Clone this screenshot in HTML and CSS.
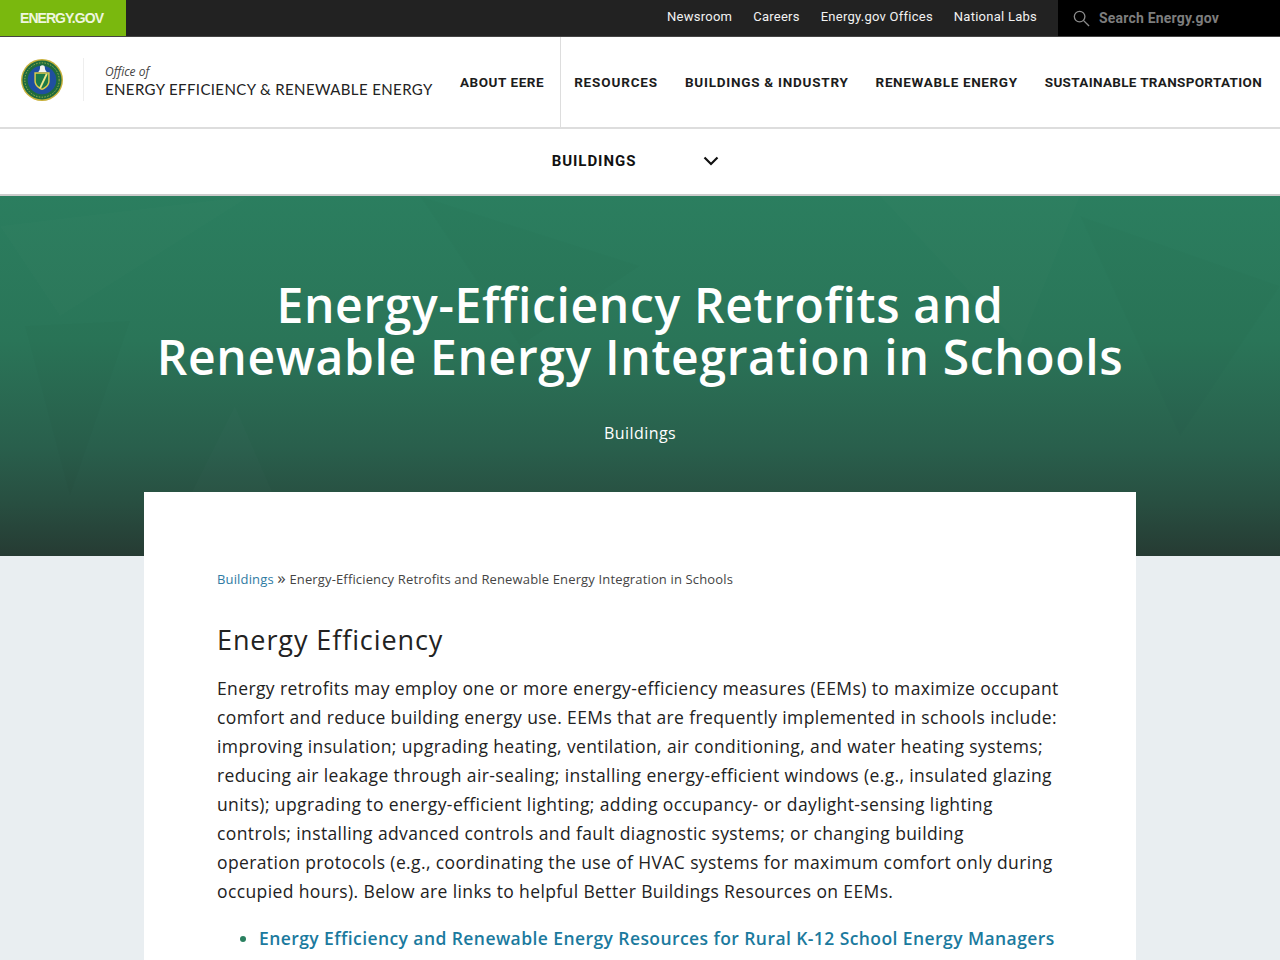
FILE: index.html
```html
<!DOCTYPE html>
<html lang="en">
<head>
    <meta charset="UTF-8">
    <meta name="viewport" content="width=device-width, initial-scale=1.0">
    <title>Energy-Efficiency Retrofits and Renewable Energy Integration in Schools</title>
    <link rel="stylesheet" href="styles.css">
</head>
<body>
    <div class="top-bar">
        <a class="top-logo">ENERGY.GOV</a>
        <nav class="top-links">
            <a>Newsroom</a>
            <a>Careers</a>
            <a>Energy.gov Offices</a>
            <a>National Labs</a>
        </nav>
        <div class="top-search">
            <svg width="17" height="17" viewBox="0 0 18 18" fill="none" stroke="#8c8c8c" stroke-width="1.4">
                <circle cx="7" cy="7" r="5.6"/>
                <path d="M11 11l6 6"/>
            </svg>
            <span>Search Energy.gov</span>
        </div>
    </div>

    <header class="site-header">
        <div class="brand">
            <svg class="seal" width="42" height="42" viewBox="0 0 44 44">
                <circle cx="22" cy="22" r="22" fill="#c9b13c"/>
                <circle cx="22" cy="22" r="20.500" fill="#1f6b3c"/>
                <circle cx="22" cy="22" r="18" fill="none" stroke="#a7b84a" stroke-width="1" stroke-dasharray="1.500 1.500"/>
                <circle cx="22" cy="22" r="15" fill="#1f4fa0"/>
                <path d="M20 7.500c2-1.500 5-1 5 1.500 0 2 .5 3 2 4.500h-9c1.500-1.500 2-3 2-6z" fill="#f4f4f0"/>
                <path d="M14 14h16v9c0 5-4 8-8 9.500-4-1.500-8-4.500-8-9.500z" fill="#e2cd4a"/>
                <path d="M15.500 15.500h13v7.500c0 4-3.500 6.500-6.500 7.800-3-1.300-6.500-3.800-6.500-7.800z" fill="#1d7a48"/>
                <path d="M27 15.500l-7 15" stroke="#f2e88a" stroke-width="2" fill="none"/>
            </svg>
            <div class="brand-text">
                <em>Office of</em>
                <span>ENERGY EFFICIENCY &amp; RENEWABLE ENERGY</span>
            </div>
        </div>
        <nav class="main-nav">
            <a class="nav-about">ABOUT EERE</a>
            <a class="nav-resources">RESOURCES</a>
            <a class="nav-buildings">BUILDINGS &amp; INDUSTRY</a>
            <a class="nav-renewable">RENEWABLE ENERGY</a>
            <a class="nav-transport">SUSTAINABLE TRANSPORTATION</a>
        </nav>
    </header>

    <div class="sub-nav">
        <span>BUILDINGS</span>
        <svg width="16" height="10" viewBox="0 0 16 10" fill="none" stroke="#111" stroke-width="2.200">
            <path d="M1.500 1.500L8 8l6.500-6.500"/>
        </svg>
    </div>

    <section class="hero">
        <!-- faint facets behind the title -->
        <svg class="hero-facets" width="1280" height="360" viewBox="0 0 1280 360">
            <polygon points="0,30 60,120 250,0" fill="#fff" opacity="0.012"/>
            <polygon points="25,130 70,300 130,125" fill="#000" opacity="0.015"/>
            <polygon points="190,300 235,210 300,360 160,360" fill="#fff" opacity="0.012"/>
            <polygon points="880,0 1080,0 1020,150" fill="#fff" opacity="0.01"/>
            <polygon points="1080,20 1280,90 1180,240" fill="#000" opacity="0.01"/>
            <polygon points="420,0 640,70 520,150" fill="#000" opacity="0.01"/>
        </svg>
        <h1>Energy-Efficiency Retrofits and<br>Renewable Energy Integration in Schools</h1>
        <p class="hero-sub">Buildings</p>
    </section>

    <main class="content">
        <p class="breadcrumb"><a>Buildings</a> <span>»</span> Energy-Efficiency Retrofits and Renewable Energy Integration in Schools</p>
        <h2>Energy Efficiency</h2>
        <p class="body-text">Energy retrofits may employ one or more energy-efficiency measures (EEMs) to maximize occupant<br>comfort and reduce building energy use. EEMs that are frequently implemented in schools include:<br>improving insulation; upgrading heating, ventilation, air conditioning, and water heating systems;<br>reducing air leakage through air-sealing; installing energy-efficient windows (e.g., insulated glazing<br>units); upgrading to energy-efficient lighting; adding occupancy- or daylight-sensing lighting<br>controls; installing advanced controls and fault diagnostic systems; or changing building<br>operation protocols (e.g., coordinating the use of HVAC systems for maximum comfort only during<br>occupied hours). Below are links to helpful Better Buildings Resources on EEMs.</p>
        <ul class="links">
            <li><a>Energy Efficiency and Renewable Energy Resources for Rural K-12 School Energy Managers</a></li>
        </ul>
    </main>
</body>
</html>
```

FILE: styles.css
```css
/* General Styles */
html, body {
    height: 960px;
    overflow: hidden;
}
body {
    margin: 0;
    font-family: "Open Sans", sans-serif;
    background-color: #e9eef1;
    color: #222;
}

/* Top Bar */
.top-bar {
    display: flex;
    height: 36px;
    background-color: #222;
    border-bottom: 1px solid #444;
}
.top-logo {
    width: 106px;
    padding-left: 20px;
    background-color: #7ab80e;
    color: #eef6df;
    font: bold 14px/37px "Liberation Sans", sans-serif;
    letter-spacing: -0.95px;
}
.top-links {
    display: flex;
    gap: 21px;
    margin-left: auto;
    padding: 8px 21px 0 0;
}
.top-links a {
    color: #f2f2f2;
    font: 400 13px/17px Roboto, sans-serif;
    letter-spacing: 0.25px;
}
.top-search {
    display: flex;
    align-items: center;
    gap: 9px;
    width: 207px;
    padding-left: 15px;
    background-color: #000;
    color: #7d7d7d;
    font: bold 14px "Roboto", sans-serif;
    letter-spacing: 0.2px;
}

/* Site Header */
.site-header {
    display: flex;
    justify-content: space-between;
    height: 90px;
    background-color: #fff;
    border-bottom: 2px solid #ddd;
}
.brand {
    display: flex;
    flex-shrink: 0;
    align-items: center;
    padding: 0 0 5px 21px;
}
.seal {
    margin-right: 20px;
}
.brand-text {
    display: flex;
    flex-direction: column;
    padding: 5px 0 3px 21px;
    border-left: 1px solid #eee;
    color: #222;
    white-space: nowrap;
}
.brand-text em {
    font-size: 12px;
    line-height: 18px;
    color: #444;
}
.brand-text span {
    font: 15px/17px Lato, sans-serif;
    letter-spacing: 0.38px;
}
.main-nav {
    display: flex;
    padding-right: 18px;
}
.main-nav a {
    display: flex;
    align-items: center;
    font: bold 13.500px Roboto, sans-serif;
    color: #1c1c1c;
    padding-left: 27px;
    white-space: nowrap;
}
.nav-about {
    letter-spacing: 0.55px;
}
.main-nav .nav-resources {
    margin-left: 16px;
    padding-left: 13px;
    border-left: 1px solid #ddd;
    letter-spacing: 0.85px;
}
.nav-buildings {
    letter-spacing: 0.75px;
}
.nav-renewable {
    letter-spacing: 0.65px;
}
.nav-transport {
    letter-spacing: 0.33px;
}

/* Section Menu */
.sub-nav {
    display: flex;
    align-items: center;
    justify-content: center;
    gap: 67px;
    height: 64px;
    padding: 0 9px 1px 0;
    background-color: #fff;
    border-bottom: 2px solid #ccc;
    font: bold 15px Roboto, sans-serif;
    letter-spacing: 0.95px;
    color: #111;
}

/* Hero */
.hero {
    position: relative;
    height: 360px;
    overflow: hidden;
    text-align: center;
    color: #fff;
    background: linear-gradient(to bottom, #2b7e5f 0%, #2a7558 40%, #295f4c 70%, #284f41 85%, #263b33 100%);
}
.hero-facets {
    position: absolute;
    top: 0;
    left: 0;
}
.hero h1 {
    position: relative;
    margin: 0;
    padding-top: 83px;
    font: 600 48px/52px "Open Sans", sans-serif;
    letter-spacing: 0.65px;
}
.hero-sub {
    position: relative;
    margin: 38px 0 0;
    font-size: 16px;
    line-height: 24px;
    letter-spacing: 0.45px;
}

/* Content Card */
.content {
    position: relative;
    width: 846px;
    height: 404px;
    margin: -64px auto 0;
    padding: 76px 73px 0;
    background-color: #fff;
}
.breadcrumb {
    margin: 0 0 32px;
    font-size: 13px;
    line-height: 22px;
    letter-spacing: 0.15px;
    color: #444;
}
.breadcrumb a {
    color: #2f7ba3;
}
.breadcrumb span {
    font-size: 17px;
    line-height: 15px;
}
h2 {
    margin: 0 0 16px;
    font: 400 27px/36px "Open Sans", sans-serif;
    color: #222;
    letter-spacing: 0.9px;
}
.body-text {
    margin: 0;
    font-size: 17.500px;
    line-height: 29px;
    letter-spacing: 0.38px;
    white-space: nowrap;
}
.links {
    margin: 18px 0 0;
    padding-left: 42px;
    font-size: 17.500px;
    line-height: 29px;
    letter-spacing: 0.42px;
}
.links li::marker {
    color: #2a8060;
}
.links a {
    color: #1b7a9e;
    font-weight: 600;
    white-space: nowrap;
}
```
